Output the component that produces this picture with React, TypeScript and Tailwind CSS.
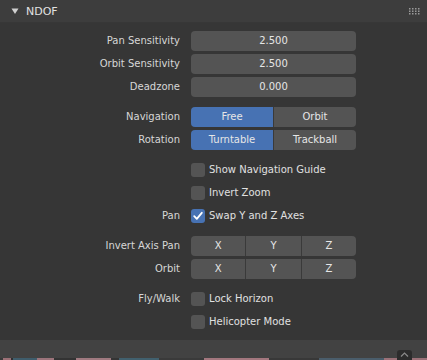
import React from 'react';

const Label = ({ children }: { children?: React.ReactNode }) => (
  <div className="w-[181px] shrink-0 pr-px text-right text-[#d6d6d6]">{children}</div>
);

const NumField = ({ label, value }: { label: string; value: string }) => (
  <div className="flex h-[20px] items-center">
    <Label>{label}</Label>
    <div className="ml-[10px] flex h-[20px] w-[165px] items-center justify-center rounded-[4px] bg-[#545454] text-[#e6e6e6]">
      {value}
    </div>
  </div>
);

const Segmented = ({ label, items, active }: { label: string; items: string[]; active?: number }) => (
  <div className="flex h-[20px] items-center">
    <Label>{label}</Label>
    <div className="ml-[10px] flex h-[20px] w-[165px] gap-px overflow-hidden rounded-[4px] bg-[#3a3a3a]">
      {items.map((it, i) => (
        <div
          key={it + i}
          className={
            'flex flex-1 items-center justify-center text-[#e6e6e6] ' +
            (i === active ? 'bg-[#4772b3]' : 'bg-[#545454]')
          }
        >
          {it}
        </div>
      ))}
    </div>
  </div>
);

const Check = ({ label, text, checked }: { label?: string; text: string; checked?: boolean }) => (
  <div className="flex h-[20px] items-center">
    <Label>{label}</Label>
    <div
      className={
        'ml-[10px] flex h-[14px] w-[14px] items-center justify-center rounded-[3px] ' +
        (checked ? 'bg-[#4772b3]' : 'bg-[#545454]')
      }
    >
      {checked && (
        <svg width="12" height="12" viewBox="0 0 12 12">
          <path d="M2.2 6.2 L4.8 8.8 L9.8 2.8" fill="none" stroke="#ffffff" strokeWidth="1.8" strokeLinecap="round" strokeLinejoin="round" />
        </svg>
      )}
    </div>
    <span className="ml-[4px] text-[#e0e0e0]">{text}</span>
  </div>
);

const strip = [
  ['#3a3a3a', 3], ['#9b7076', 8], ['#2f2f2f', 2], ['#3f5d6c', 24], ['#9c747b', 17], ['#333333', 22],
  ['#a07a80', 35], ['#343434', 8], ['#41606e', 40], ['#3a3a3a', 45], ['#a3777e', 65], ['#383838', 50],
  ['#4a5d6b', 65], ['#9b7178', 43],
] as const;

export default function App() {
  return (
    <div className="flex h-[360px] w-[427px] flex-col overflow-hidden bg-[#424242] font-['DejaVu_Sans',sans-serif] text-[10px] leading-none">
      {/* panel header */}
      <div className="flex h-[23px] shrink-0 items-center bg-[#3d3d3d] border-b border-[#373737]">
        <svg className="ml-[11px]" width="8" height="8" viewBox="0 0 8 8">
          <path d="M0.5 1.5 L7.5 1.5 L4 7 Z" fill="#d0d0d0" />
        </svg>
        <span className="ml-[7px] text-[11px] text-[#e2e2e2]">NDOF</span>
        <svg className="ml-auto mr-[7px]" width="11" height="7" viewBox="0 0 11 7">
          {[0, 3, 6, 9].map((x) =>
            [0, 2.5, 5].map((y) => <rect key={x + '-' + y} x={x} y={y} width="1.5" height="1.5" fill="#9a9a9a" />)
          )}
        </svg>
      </div>

      {/* panel body */}
      <div className="flex h-[317px] shrink-0 flex-col bg-[#363636] pt-[8px]">
        <div className="flex flex-col gap-[3px]">
          <NumField label="Pan Sensitivity" value="2.500" />
          <NumField label="Orbit Sensitivity" value="2.500" />
          <NumField label="Deadzone" value="0.000" />
        </div>
        <div className="mt-[10px] flex flex-col gap-[3px]">
          <Segmented label="Navigation" items={['Free', 'Orbit']} active={0} />
          <Segmented label="Rotation" items={['Turntable', 'Trackball']} active={0} />
        </div>
        <div className="mt-[10px] flex flex-col gap-[3px]">
          <Check text="Show Navigation Guide" />
          <Check text="Invert Zoom" />
          <Check label="Pan" text="Swap Y and Z Axes" checked />
        </div>
        <div className="mt-[10px] flex flex-col gap-[3px]">
          <Segmented label="Invert Axis Pan" items={['X', 'Y', 'Z']} />
          <Segmented label="Orbit" items={['X', 'Y', 'Z']} />
        </div>
        <div className="mt-[10px] flex flex-col gap-[3px]">
          <Check label="Fly/Walk" text="Lock Horizon" />
          <Check text="Helicopter Mode" />
        </div>
      </div>

      {/* region below panel */}
      <div className="relative flex-1">
        <div className="absolute bottom-[-4px] left-[397px] flex h-[12px] w-[15px] items-start justify-center rounded-[3px] bg-[#2c2c2c] pt-[2px]">
          <svg width="9" height="5" viewBox="0 0 9 5">
            <path d="M1 4.5 L4.5 1 L8 4.5" fill="none" stroke="#8a8a8a" strokeWidth="1.2" />
          </svg>
        </div>
      </div>
      <div className="flex h-[2px] shrink-0">
        {strip.map(([c, w], i) => (
          <div key={i} style={{ backgroundColor: c, width: w }} />
        ))}
      </div>
    </div>
  );
}
